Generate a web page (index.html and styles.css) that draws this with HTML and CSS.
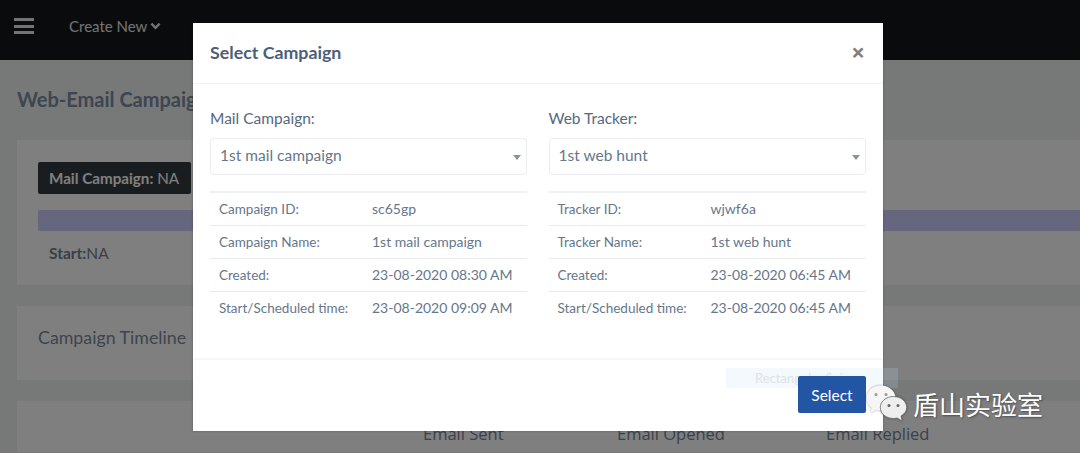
FILE: index.html
```html
<!DOCTYPE html>
<html lang="en">
<head>
    <meta charset="UTF-8">
    <meta name="viewport" content="width=device-width, initial-scale=1.0">
    <title>Web-Email Campaign</title>
    <link rel="stylesheet" href="styles.css">
</head>
<body>
    <nav class="topbar">
        <div class="burger"><span></span><span></span><span></span></div>
        <div class="create-new">Create New
            <svg class="chevron" viewBox="0 0 12 8" width="11" height="8"><path d="M1.500 1.500 6 6l4.500-4.500" fill="none" stroke="currentColor" stroke-width="2.600"/></svg>
        </div>
    </nav>

    <main class="page">
        <h1 class="page-title">Web-Email Campaign</h1>

        <section class="card card-status">
            <div class="badge"><b>Mail Campaign:</b> NA</div>
            <div class="progress"></div>
            <div class="start"><b>Start:</b>NA</div>
        </section>

        <section class="card card-timeline">
            <h2>Campaign Timeline</h2>
        </section>

        <section class="card card-stats">
            <span>Email Sent</span>
            <span>Email Opened</span>
            <span>Email Replied</span>
        </section>
    </main>

    <div class="backdrop"></div>

    <div class="modal">
        <header class="modal-header">
            <h3>Select Campaign</h3>
            <span class="close">×</span>
        </header>

        <div class="modal-body">
            <div class="col">
                <label>Mail Campaign:</label>
                <div class="select">1st mail campaign<i class="caret"></i></div>
                <table class="info">
                    <tr><td>Campaign ID:</td><td>sc65gp</td></tr>
                    <tr><td>Campaign Name:</td><td>1st mail campaign</td></tr>
                    <tr><td>Created:</td><td>23-08-2020 08:30 AM</td></tr>
                    <tr><td>Start/Scheduled time:</td><td>23-08-2020 09:09 AM</td></tr>
                </table>
            </div>
            <div class="col">
                <label>Web Tracker:</label>
                <div class="select">1st web hunt<i class="caret"></i></div>
                <table class="info">
                    <tr><td>Tracker ID:</td><td>wjwf6a</td></tr>
                    <tr><td>Tracker Name:</td><td>1st web hunt</td></tr>
                    <tr><td>Created:</td><td>23-08-2020 06:45 AM</td></tr>
                    <tr><td>Start/Scheduled time:</td><td>23-08-2020 06:45 AM</td></tr>
                </table>
            </div>
        </div>

        <footer class="modal-footer">
            <div class="snip">Rectangular Snip</div>
            <button class="btn-select">Select</button>
        </footer>
    </div>

    <!-- watermark sits over everything -->
    <div class="watermark">
        <svg class="wechat" viewBox="0 0 42 36" width="42" height="36">
            <path d="M15 .5C7 .5 .5 5.800 .5 13c0 4 2 7.300 5.200 9.700L4.500 28l5.800-3.200c1.500.4 3 .6 4.700.6 8 0 14.500-5.500 14.500-12.400S23 .5 15 .5z" fill="#f6f6f6"/>
            <circle cx="10" cy="9.500" r="1.500" fill="#999"/>
            <circle cx="20" cy="9.500" r="1.500" fill="#999"/>
            <path d="M27.500 11.500c-7.300 0-13.200 4.800-13.200 11s5.900 11 13.200 11c1.300 0 2.500-.2 3.700-.5l5 3-1.200-5c3.500-2 5.700-5 5.700-8.500 0-6.200-5.900-11-13.200-11z" fill="#eeeeee" stroke="#666" stroke-width=".8"/>
            <circle cx="23" cy="20.500" r="1.500" fill="#666"/>
            <circle cx="32" cy="20.500" r="1.500" fill="#666"/>
        </svg>
        <span>盾山实验室</span>
    </div>
</body>
</html>
```

FILE: styles.css
```css
* { box-sizing: border-box; }
body { margin: 0; height: 453px; overflow: hidden; background: #eff0f0; font-family: Lato, "Noto Sans", sans-serif; color: #76889c; }

.topbar { height: 60px; background: #14161a; display: flex; align-items: center; padding-left: 14px; color: #ffffff; }
.burger { width: 20px; display: flex; flex-direction: column; gap: 3.500px; margin-right: 35px; margin-top: -8px; }
.burger span { height: 3px; background: #e8e8e8; }
.create-new { font-size: 15px; margin-top: -9px; display: flex; align-items: center; gap: 3px; color: #e4e8ea; }

.page { padding-left: 17px; }
.page-title { margin: 29px 0 30px; font-size: 20px; font-weight: 700; line-height: 21px; color: #7a8ca2; }
.card { background: #ffffff; margin-bottom: 21px; padding-left: 21px; }
.card-status { height: 145px; padding-top: 22px; }
.badge { display: inline-block; width: 153px; height: 32px; line-height: 32px; padding-left: 11px; background: #343a40; border-radius: 2px; color: #fff; font-size: 15.200px; }
.progress { height: 21px; margin-top: 16px; background: #ccccff; border-radius: 2px 0 0 2px; }
.start { margin: 12px 0 0 11px; font-size: 15.500px; line-height: 20px; color: #75808c; }
.card-timeline { height: 74px; padding-top: 21px; }
.card-timeline h2 { margin: 0; font-size: 17.800px; font-weight: 400; line-height: 20px; color: #7b8a9c; }
.card-stats { height: 51px; margin-bottom: 0; display: flex; padding: 21px 0 0 406px; font-size: 16.500px; font-family: "Open Sans", sans-serif; color: #74849a; }
.card-stats span:nth-child(1) { width: 194px; }
.card-stats span:nth-child(2) { width: 209px; }

.backdrop { position: absolute; inset: 0; background: rgba(0, 0, 0, .5); }

.modal { position: absolute; left: 193px; top: 23px; width: 690px; height: 408px; background: #fff; display: flex; flex-direction: column; box-shadow: 0 0 2px rgba(0, 0, 0, .3); }
.modal-header { height: 61px; display: flex; align-items: center; justify-content: space-between; padding: 0 18px 3px 17px; border-bottom: 1px solid #eff1f3; }
.modal-header h3 { margin: 0; font-size: 17.800px; font-weight: 700; color: #4b6078; }
.close { font-size: 24px; font-weight: 700; color: #808080; line-height: 1; font-family: "Noto Sans", sans-serif; }

.modal-body { flex: 1; display: flex; gap: 21.500px; padding: 24px 17px 0; }
.col { width: 317px; }
.col label { display: block; font-size: 15.500px; line-height: 20px; color: #55697f; }
.select { position: relative; height: 37px; margin-top: 10px; padding-left: 9px; border: 1px solid #ebedf0; border-radius: 4px; font-size: 15.500px; line-height: 32px; color: #66778a; }
.caret { position: absolute; right: 5px; top: 16px; border: 4.500px solid transparent; border-top: 5px solid #8a939c; border-bottom: 0; }

.info { width: 100%; margin-top: 16px; border-collapse: collapse; border-top: 2px solid #eef0f2; font-size: 14px; color: #66778a; }
.info td { height: 33px; padding: 0 0 1px 9px; border-bottom: 1px solid #e8eaed; }
.info tr:last-child td { border-bottom: 0; }
.info td:first-child { width: 153px; padding-bottom: 0; font-size: 13.500px; }

.modal-footer { position: relative; height: 73px; border-top: 2px solid #f6f7f8; display: flex; justify-content: flex-end; padding: 16px 17px 0 0; }
.snip { position: absolute; left: 533px; top: 8px; width: 172px; height: 20px; background: rgba(190, 220, 245, .18); color: #e0e3e6; font-size: 13px; line-height: 20px; padding-left: 29px; }
.btn-select { position: relative; width: 68px; height: 37px; border: 0; border-radius: 2px; background: #2255a4; color: #fff; font: 15.500px Lato, sans-serif; }

.watermark { position: absolute; left: 866px; top: 385px; display: flex; align-items: flex-start; gap: 5px; color: #fff; font: 26px/38px "Noto Sans CJK SC", sans-serif; text-shadow: 1px 1px 2px rgba(0, 0, 0, .4); }
.wechat { filter: drop-shadow(0 0 1px rgba(0, 0, 0, .35)); }
```
